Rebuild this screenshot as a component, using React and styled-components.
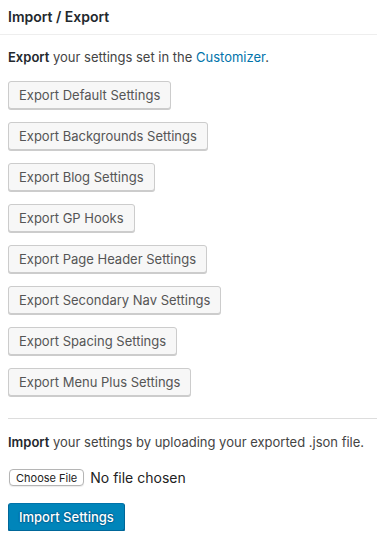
import React from "react";
import styled, { createGlobalStyle } from "styled-components";

const Global = createGlobalStyle`
  html, body { margin: 0; padding: 0; background: #fff; }
  body { font-family: Inter, "Liberation Sans", Arial, sans-serif; color: #23282d; }
`;

const Panel = styled.div`
  width: 377px;
  background: #fff;
`;

const Header = styled.h3`
  margin: 0;
  padding: 7px 8px;
  font-size: 14px;
  line-height: 20px;
  font-weight: 600;
  color: #23282d;
  border-bottom: 1px solid #eee;
`;

const Section = styled.div`
  padding: 0 0 0 8px;
`;

const Text = styled.p`
  margin: ${p => p.$top || 0}px 0 0;
  font-size: 13px;
  line-height: 18px;
  color: #444;
  strong { font-weight: 600; color: #23282d; }
  a { color: #0073aa; text-decoration: none; }
`;

const ButtonList = styled.div`
  display: flex;
  flex-direction: column;
  align-items: flex-start;
  gap: 13px;
  margin-top: 15px;
`;

const Button = styled.button`
  font-family: inherit;
  font-size: 13px;
  height: 28px;
  line-height: 26px;
  padding: 0 10px 1px;
  border-radius: 3px;
  border-width: 1px;
  border-style: solid;
  border-color: ${p => (p.$primary ? "#0073aa #006799 #006799" : "#ccc")};
  background: ${p => (p.$primary ? "#0085ba" : "#f7f7f7")};
  box-shadow: 0 1px 0 ${p => (p.$primary ? "#006799" : "#ccc")};
  color: ${p => (p.$primary ? "#fff" : "#555")};
  font-weight: ${p => (p.$primary ? 500 : 400)};
  text-shadow: ${p => (p.$primary ? "0 -1px 1px #006799, 1px 0 1px #006799, 0 1px 1px #006799, -1px 0 1px #006799" : "none")};
  white-space: nowrap;
  cursor: pointer;
`;

const Divider = styled.hr`
  border: 0;
  border-top: 1px solid #ddd;
  margin: 22px 0 14px;
`;

const FileRow = styled.div`
  display: flex;
  align-items: center;
  gap: 6px;
  margin-top: 18px;
  margin-left: 1px;
`;

const FileButton = styled.span`
  display: inline-flex;
  align-items: center;
  height: 15px;
  padding: 0 6px;
  border: 1px solid #b5b5b5;
  border-radius: 4px;
  background: #fff;
  font-size: 11px;
  color: #222;
  box-shadow: 0 1px 1px rgba(0,0,0,0.08);
`;

const FileText = styled.span`
  font-size: 14px;
  color: #222;
`;

const ImportWrap = styled.div`
  margin-top: 17px;
`;

const exports = [
  "Export Default Settings",
  "Export Backgrounds Settings",
  "Export Blog Settings",
  "Export GP Hooks",
  "Export Page Header Settings",
  "Export Secondary Nav Settings",
  "Export Spacing Settings",
  "Export Menu Plus Settings",
];

export default function App() {
  return (
    <Panel>
      <Global />
      <Header>Import / Export</Header>
      <Section>
        <Text $top={13}>
          <strong>Export</strong> your settings set in the <a href="#">Customizer</a>.
        </Text>
        <ButtonList>
          {exports.map(e => (
            <Button key={e}>{e}</Button>
          ))}
        </ButtonList>
        <Divider />
        <Text>
          <strong>Import</strong> your settings by uploading your exported .json file.
        </Text>
        <FileRow>
          <FileButton>Choose File</FileButton>
          <FileText>No file chosen</FileText>
        </FileRow>
        <ImportWrap>
          <Button $primary>Import Settings</Button>
        </ImportWrap>
      </Section>
    </Panel>
  );
}
